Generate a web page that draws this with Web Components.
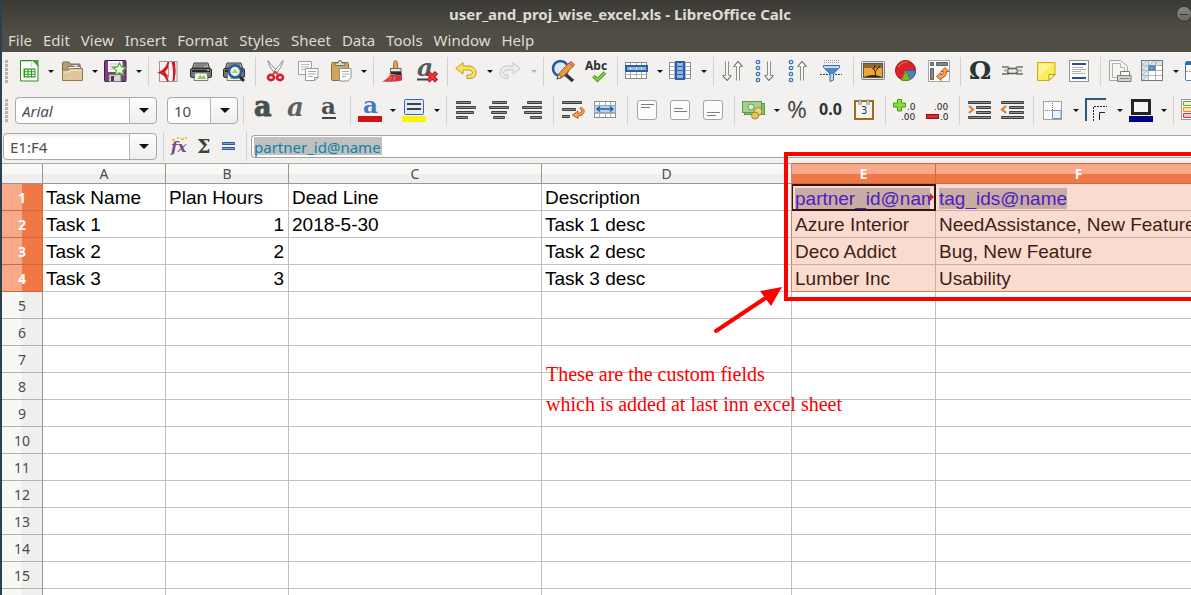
<!DOCTYPE html>
<html lang="en">
<head>
<meta charset="utf-8">
<title>user_and_proj_wise_excel.xls - LibreOffice Calc</title>
<style>
  html, body { margin: 0; height: 100%; overflow: hidden; }
  body { font-family: "Noto Sans", "Open Sans", sans-serif; font-size: 14px; color: #4c4c4c; }
</style>
</head>
<body>
<calc-window>
  <title-bar slot="top">user_and_proj_wise_excel.xls - LibreOffice Calc</title-bar>
  <menu-bar slot="top" items="File,Edit,View,Insert,Format,Styles,Sheet,Data,Tools,Window,Help"></menu-bar>

  <tool-bar slot="bars" label="Standard">
    <tool-button icon="new" label="New" menu></tool-button>
    <tool-button icon="open" label="Open" menu></tool-button>
    <tool-button icon="save" label="Save" menu></tool-button>
    <tool-sep></tool-sep>
    <tool-button icon="pdf" label="Export as PDF"></tool-button>
    <tool-button icon="print" label="Print"></tool-button>
    <tool-button icon="preview" label="Print Preview"></tool-button>
    <tool-sep></tool-sep>
    <tool-button icon="cut" label="Cut"></tool-button>
    <tool-button icon="copy" label="Copy"></tool-button>
    <tool-button icon="paste" label="Paste" menu></tool-button>
    <tool-sep></tool-sep>
    <tool-button icon="brush" label="Clone Formatting"></tool-button>
    <tool-button icon="clear" label="Clear Formatting"></tool-button>
    <tool-sep></tool-sep>
    <tool-button icon="undo" label="Undo" menu></tool-button>
    <tool-button icon="redo" label="Redo" menu disabled></tool-button>
    <tool-sep></tool-sep>
    <tool-button icon="find" label="Find and Replace"></tool-button>
    <tool-button icon="spell" label="Spelling"></tool-button>
    <tool-sep></tool-sep>
    <tool-button icon="row" label="Row" menu></tool-button>
    <tool-button icon="col" label="Column" menu></tool-button>
    <tool-sep></tool-sep>
    <tool-button icon="sort" label="Sort"></tool-button>
    <tool-button icon="asc" label="Sort Ascending"></tool-button>
    <tool-button icon="desc" label="Sort Descending"></tool-button>
    <tool-button icon="filter" label="AutoFilter"></tool-button>
    <tool-sep></tool-sep>
    <tool-button icon="image" label="Image"></tool-button>
    <tool-button icon="chart" label="Chart"></tool-button>
    <tool-button icon="pivot" label="Pivot Table"></tool-button>
    <tool-sep></tool-sep>
    <tool-button icon="omega" label="Special Character"></tool-button>
    <tool-button icon="link" label="Hyperlink"></tool-button>
    <tool-button icon="note" label="Comment"></tool-button>
    <tool-button icon="header" label="Headers and Footers"></tool-button>
    <tool-sep></tool-sep>
    <tool-button icon="area" label="Define Print Area"></tool-button>
    <tool-button icon="freeze" label="Freeze Rows and Columns" menu></tool-button>
    <tool-button icon="split" label="Split Window"></tool-button>
  </tool-bar>

  <tool-bar slot="bars" label="Formatting">
    <combo-box label="Font Name" value="Arial" style="--w:142px;--fs:italic"></combo-box>
    <combo-box label="Font Size" value="10" style="--w:71px;--mr:1px"></combo-box>
    <tool-sep></tool-sep>
    <tool-button icon="bold" label="Bold"></tool-button>
    <tool-button icon="italic" label="Italic"></tool-button>
    <tool-button icon="underline" label="Underline"></tool-button>
    <tool-sep></tool-sep>
    <tool-button icon="fontcolor" label="Font Color" menu></tool-button>
    <tool-button icon="highlight" label="Background Color" menu></tool-button>
    <tool-sep></tool-sep>
    <tool-button icon="left" label="Align Left"></tool-button>
    <tool-button icon="center" label="Center Horizontally"></tool-button>
    <tool-button icon="right" label="Align Right"></tool-button>
    <tool-sep></tool-sep>
    <tool-button icon="wrap" label="Wrap Text"></tool-button>
    <tool-button icon="merge" label="Merge Cells"></tool-button>
    <tool-sep></tool-sep>
    <tool-button icon="vtop" label="Align Top"></tool-button>
    <tool-button icon="vmid" label="Center Vertically"></tool-button>
    <tool-button icon="vbot" label="Align Bottom"></tool-button>
    <tool-sep></tool-sep>
    <tool-button icon="money" label="Currency" menu></tool-button>
    <tool-button icon="percent" label="Percent"></tool-button>
    <tool-button icon="number" label="Number"></tool-button>
    <tool-button icon="date" label="Date"></tool-button>
    <tool-sep></tool-sep>
    <tool-button icon="adddec" label="Add Decimal Place"></tool-button>
    <tool-button icon="deldec" label="Delete Decimal Place"></tool-button>
    <tool-sep></tool-sep>
    <tool-button icon="indent" label="Increase Indent"></tool-button>
    <tool-button icon="outdent" label="Decrease Indent"></tool-button>
    <tool-sep></tool-sep>
    <tool-button icon="borders" label="Borders" menu></tool-button>
    <tool-button icon="bstyle" label="Border Style" menu></tool-button>
    <tool-button icon="bcolor" label="Border Color" menu></tool-button>
    <tool-sep></tool-sep>
    <tool-button icon="cond" label="Conditional Formatting"></tool-button>
  </tool-bar>

  <formula-bar slot="bars" cell="E1:F4" value="partner_id@name"></formula-bar>
  <sheet-grid slot="sheet"></sheet-grid>
  <frame-mark slot="sheet"></frame-mark>
  <arrow-mark slot="sheet"></arrow-mark>
  <sheet-note slot="sheet">These are the custom fields<br>which is added at last inn excel sheet</sheet-note>
</calc-window>

<script>
const svg = (body, w = 24, h = 24) =>
  `<svg width="${w}" height="${h}" viewBox="0 0 ${w} ${h}" aria-hidden="true" fill="none">${body}</svg>`;

const glyph = (t, x, y, size, fill, extra = '') =>
  `<text x="${x}" y="${y}" font-size="${size}" fill="${fill}" ${extra}>${t}</text>`;

const bars = list => list.map(([x, y, w]) =>
  `<rect x="${x}" y="${y}" width="${w}" height="3" rx="1" fill="#3d403c"/><path d="M${x + 1} ${y + 1.5}h${w - 2}" stroke="#8c908a"/>`).join('');

const sheetLines = `<rect x=".5" y="3.5" width="21" height="16" fill="#fff" stroke="#8a8c88"/><path d="M1 7.5h20M1 11.5h20M1 15.5h20M5.5 4v15M11.5 4v15M16.5 4v15" stroke="#b0b2ae"/>`;
const printer = `<path d="M5 4h14l1.500 5h-17z" fill="#a9aba7" stroke="#3c3e3b"/><path d="M6 6h12M5.500 8h9" stroke="#5b5e5a"/><rect x="1.500" y="9.500" width="21" height="9" rx="1.500" fill="#747774" stroke="#2b2d2b"/><rect x="3" y="11" width="18" height="2" fill="#282a28"/><path d="M6 14h12l1 7.500H5z" fill="#f4f6f3" stroke="#777a76"/><path d="M8 20l3-4 2 2 2-2 2 4z" fill="#8cc864"/><path d="M18 11.500h2" stroke="#8ae234"/>`;
const downArrow = x => `<path d="M${x - 1.500} 2.500v14h-3l4.500 5 4.500-5h-3v-14" fill="#f6f7f5" stroke="#8b8e89"/><path d="M${x - 4} 17l4 4.500 4-4.500" stroke="#5c605a"/>`;
const upArrow = x => `<path d="M${x - 1.500} 21.500v-14h-3l4.500-5 4.500 5h-3v14" fill="#f6f7f5" stroke="#8b8e89"/><path d="M${x - 4} 7l4-4.500 4 4.500" stroke="#5c605a"/>`;
const dots = `<g fill="#eaf2fb" stroke="#3f73b5" stroke-width="1.300"><circle cx="4" cy="3" r="1.700"/><circle cx="4" cy="9" r="1.700"/><circle cx="4" cy="15" r="1.700"/><circle cx="4" cy="21" r="1.700"/></g>`;
const box = lines => `<rect x="2.500" y="2.500" width="19" height="19" rx="2.500" fill="#fcfcfc" stroke="#a2a4a0"/><path d="${lines}" stroke="#7b7e79"/>`;
const serif = 'font-family="DejaVu Serif, serif" font-weight="bold"';
const sans = 'font-family="DejaVu Sans, sans-serif"';

const ICONS = {
  new: svg(`<path d="M4.500 1.500H17l5 5v15.500H4.500z" fill="#fff" stroke="#2b8d1e"/><path d="M16 1h6.500v7z" fill="#3da42c"/><path d="M5.500 2.500h10v5" stroke="#b6e2ad"/><rect x="7.500" y="9.500" width="12" height="9" fill="#2b9a1a"/><path d="M9 11.500h2.500m1 0H15m1 0h2.500M9 14h2.500m1 0H15m1 0h2.500M9 16.500h2.500m1 0H15m1 0h2.500" stroke="#fff" stroke-width="1.400"/>`),
  open: svg(`<path d="M2.500 20V4q0-1 1-1H9l1.500 2H20v8" fill="#b89d72" stroke="#80694a"/><path d="M8 7.500h12.500V15H8z" fill="#fff" stroke="#6f6f6f"/><path d="M10 5.500h8v3" fill="#e7e7e7" stroke="#777"/><path d="M2.500 11H8l2-1.500h12.500v12h-20z" fill="#ddc6a0" stroke="#8f7650"/><path d="M4 13h5l1.500-1.500H21" stroke="#f1e2c7"/>`),
  save: svg(`<rect x=".5" y="1.500" width="21.500" height="21" rx="1" fill="#7d3e86" stroke="#451750"/><rect x="4" y="2" width="14.500" height="11" fill="#fafafa"/><path d="M6 5h10M6 7.500h10M6 10h7" stroke="#c0b4c4"/><rect x="5" y="15.500" width="12" height="7" fill="#d9d9d9" stroke="#777"/><rect x="7" y="17" width="3" height="5" fill="#5b2766"/><path d="M15.500 4l2 4 4.500.5-3.300 3 .9 4.500-4.100-2.200-4 2.200.9-4.500L9 8.500l4.500-.5z" fill="#f2fdec" stroke="#55b52e" stroke-width="1.300"/>`),
  pdf: svg(`<rect x="3.500" y="2.500" width="17.500" height="20" fill="#f3f3f2" stroke="#999"/><path d="M12.500 3Q11 10 4 13.500q6 2 8 9" stroke="#cf1b20" stroke-width="2"/><path d="M12.500 6v13L6 13z" fill="#cf1b20"/><path d="M12 9v8L9 13z" fill="#f3f3f2"/><path d="M15.500 3h3.500q1.500 9.500-.5 19h-2q1.500-10-1-19z" fill="#cf1b20"/>`),
  print: svg(printer),
  preview: svg(printer + `<path d="M16 16l6 6" stroke="#2a2c2a" stroke-width="3"/><circle cx="13" cy="12.500" r="6" fill="#e9f2dd" stroke="#2d5a9e" stroke-width="2.500"/><path d="M10 14l3-4 3 4z" fill="#a8cf72"/>`),
  cut: svg(`<path d="M5 1.500q0 5 7 13l2-2.500Q8 6 5 1.500z" fill="#f5f5f5" stroke="#8a8c88"/><path d="M20 1.500q0 5-7 13L11 12q6-6 9-10.500z" fill="#fcfcfc" stroke="#8a8c88"/><g stroke="#cf2029" stroke-width="2.600"><ellipse cx="8" cy="18.500" rx="3" ry="2.600"/><ellipse cx="17" cy="18.500" rx="3" ry="2.600"/></g><path d="M10 15l2.500-2 2.500 2" stroke="#d83a40" stroke-width="2"/>`),
  copy: svg(`<path d="M2.500 2.500h13v13h-13z" fill="#fafafa" stroke="#a0a29e"/><path d="M5 5.500h8M5 8h8M5 10.500h6" stroke="#b9bbb7"/><path d="M9.500 9.500h12.500v9l-3 3H9.500z" fill="#fff" stroke="#979995"/><path d="M12 12.500h8M12 15h8M12 17.500h5" stroke="#a9aba7"/><path d="M18.500 21.500v-3H22" stroke="#979995"/>`),
  paste: svg(`<rect x="2.500" y="3.500" width="17" height="18" rx="1" fill="#d3a45c" stroke="#9a6c24"/><path d="M6 6.500V4h3q0-2.500 2-2.500T13 4h3v2.500z" fill="#ddd" stroke="#6e706c"/><path d="M10.500 9.500h11.500v9l-3 3.500h-8.500z" fill="#fff" stroke="#8f918d"/><path d="M13 12.500h7M13 15h7M13 17.500h4" stroke="#aaa"/>`),
  brush: svg(`<path d="M1 22.500q6-2 8-7l12 1v5q-9 2-20 1z" fill="#d8333b"/><path d="M4 21l5-4M8 21.500l3-4M13 21.500l1-4" stroke="#f0868a"/><path d="M9 15l1-3h10l1 4.500z" fill="#2b2b2b"/><rect x="9.500" y="9.500" width="10.500" height="3" fill="#e9e9e9" stroke="#666"/><path d="M12.500 9.500l.5-7q1.500-2 3 0l1 7z" fill="#e7a657" stroke="#a4672a"/>`),
  clear: svg(glyph('a', 3, 17, 25, '#565b58', serif + ' font-style="italic"') + `<path d="M3 20.500h10" stroke="#3f4441" stroke-width="2"/><path d="M14 13.500l8.500 8.500M22.500 13.500L14 22" stroke="#a30f14" stroke-width="4.500"/><path d="M14.500 14l7.500 7.500M22 14L14.500 21.500" stroke="#f0353a" stroke-width="2.500"/>`),
  undo: svg(`<path d="M.8 9.500L8 3.500V7h7q6 1 6 7 0 5-6 5.500h-3v-3.500h3q2.500-.5 2.500-2.500 0-2-3.500-2.500H8v4z" fill="#f7e36b" stroke="#c09b12" stroke-linejoin="round"/>`),
  redo: svg(`<path d="M21.200 9.500L14 3.500V7H7q-6 1-6 7 0 5 6 5.500h2v-3.500H7q-2.500-.5-2.500-2.500 0-2 3.500-2.500h6v4z" fill="#ececea" stroke="#c6c8c4" stroke-linejoin="round"/>`),
  find: svg(`<path d="M14 15l8 7" stroke="#333" stroke-width="3.500"/><circle cx="9.500" cy="9.500" r="7.500" fill="#dce8f6" stroke="#2a559c" stroke-width="2.600"/><path d="M6 20l1.500-5L18 4l4 3.500L11 18.500z" fill="#f0993a" stroke="#a7601b"/><path d="M18 4l2-1.500 3.500 3-1.500 2z" fill="#f08a92" stroke="#b24b55"/><path d="M6 20l1.500-5 3.500 3.500z" fill="#f0dcb4" stroke="#555"/>`),
  spell: svg(glyph('Abc', 1, 11, 12, '#2c2f2c', 'font-family="Noto Sans, sans-serif" font-weight="bold"') + `<path d="M9.500 17l4 4L21 13.500" stroke="#3f9a14" stroke-width="3.500"/><path d="M9.500 17l4 4L21 13.500" stroke="#8be04e" stroke-width="1.300"/>`),
  row: svg(sheetLines + `<rect x="1" y="7" width="21" height="5" fill="#8fb5e3" stroke="#2a5fa8" stroke-width="2"/><path d="M5.500 8v3M11.500 8v3M16.500 8v3" stroke="#cfe0f4"/>`),
  col: svg(sheetLines + `<rect x="7" y="3" width="8" height="17" fill="#8fb5e3" stroke="#2a5fa8" stroke-width="2"/><path d="M8 7.500h6M8 11.500h6M8 15.500h6" stroke="#2f66b0"/>`),
  sort: svg(downArrow(6) + upArrow(17)),
  asc: svg(dots + downArrow(15)),
  desc: svg(dots + upArrow(15)),
  filter: svg(`<path d="M4 1.500h16M4 3.500h16" stroke="#9a9c98" stroke-dasharray="1 1"/><path d="M0 15.500h22" stroke="#444" stroke-dasharray="2 1"/><path d="M3.500 6.500h16v2l-6 6.500v6l-3.500 1.500V15l-6.500-6.500z" fill="#c5daf1" stroke="#346bb0"/><path d="M4 9h15L13 15h-3z" fill="#4c86cb"/>`),
  image: svg(`<rect x=".5" y="2.500" width="23" height="18" rx="1" fill="#e4e4e1" stroke="#7f817d"/><rect x="2.500" y="4.500" width="19" height="14" fill="#efa53c" stroke="#555"/><path d="M3 5h18v4H3z" fill="#55401f" opacity=".6"/><path d="M3 18q9-4 18 0z" fill="#3b2508"/><path d="M14.500 17q1-5-3-8M14.500 12.500q1-3 4.500-5M13 10l1-4" stroke="#2b1a07"/>`),
  chart: svg(`<circle cx="11.500" cy="11.500" r="10" fill="#dc2226" stroke="#9c1216"/><path d="M11.500 11.500h10q0 6-5 9z" fill="#4d83c4" stroke="#2c5b97"/><path d="M11.500 11.500l5 9q-5 2-9 .5z" fill="#79b92c" stroke="#5a8f1c"/><path d="M4 8q3-5 9-5" stroke="#f3777a"/>`),
  pivot: svg(`<rect x="1.500" y="1.500" width="21" height="21" fill="#fbfbfb" stroke="#a6a8a4"/><path d="M3.500 3.500h3v3h-3zM9.500 3.500h11v3h-11zM3.500 9.500h3v11h-3z" fill="#888a87" stroke="#5d5f5c"/><path d="M18 8.500l4 4h-2.500q0 6-5.500 6.500V21.500l-4.500-4 4.500-4v2.500q2.500-.5 2.500-3.500H14z" fill="#f5a55c" stroke="#c0570c"/>`),
  omega: svg(glyph('Ω', 1, 20, 25, '#2b3334', serif)),
  link: svg(`<path d="M1 8h6l3 4M22 8h-6l-3 4M1 15h6l3-3M22 15h-6l-3-3" stroke="#8e918c" stroke-width="2"/><rect x="6.500" y="9.500" width="10" height="5" rx="2.500" fill="#e9eae8" stroke="#5e615c" stroke-width="1.400"/><path d="M3 11.500h4M16 11.500h5" stroke="#a3a5a1" stroke-width="2"/>`),
  note: svg(`<path d="M3.500 3.500h17.500v12l-6 6H3.500z" fill="#fbec58" stroke="#cdae12"/><path d="M15 21.500v-6h6z" fill="#fff6a5" stroke="#b99b10"/><path d="M5 5h14L5 17z" fill="#fdf594"/>`),
  header: svg(`<rect x="2.500" y="1.500" width="19" height="21" fill="#fbfbfb" stroke="#92948f"/><path d="M5 5h14M5 19h14" stroke="#27509a" stroke-width="2"/><path d="M5 8.500h11M5 10.500h14M5 12.500h9M5 14.500h13" stroke="#b0b2ae"/>`),
  area: svg(`<path d="M1.500 1.500h11l7 6v14h-18z" fill="#f6f6f5" stroke="#a4a6a2"/><path d="M4.500 4.500h8v4h4v10h-12z" stroke="#b0b2ae"/><path d="M12.500 12.500h9v5h-9z" fill="#fff" stroke="#7a7c78"/><path d="M9.500 16.500h13.500v6H9.500z" fill="#d0d2ce" stroke="#7a7c78"/><path d="M12 19.500h9" stroke="#888"/>`),
  freeze: svg(`<rect x=".5" y="1.500" width="21" height="20" fill="#fff" stroke="#777"/><path d="M1 2h6v19H1zM7 2h14v4H7z" fill="#dbe7f4"/><path d="M1 6l5-4M1 11l6-5M1 16l6-5M1 21l6-5M9 6l4-4M14 6l4-4" stroke="#9fbcdc"/><path d="M7.500 2v19M14.500 2v19M1 6.500h20M1 11.500h20M1 16.500h20" stroke="#b3b5b1"/><rect x="8" y="7" width="6" height="4" fill="#6a9ad3" stroke="#3f6fae"/>`),
  split: svg(`<rect x=".5" y="2.500" width="22" height="19" rx="1" fill="#fff" stroke="#477bbd"/><path d="M1 4.500h21" stroke="#3767a8" stroke-width="3"/><path d="M1 12.500h21" stroke="#e88a3c" stroke-dasharray="2 1"/>`),

  bold: svg(glyph('a', 3, 18, 27, '#4b504e', serif + ' stroke="#4b504e"')),
  italic: svg(glyph('a', 3, 18, 26, '#5c6260', serif + ' font-style="italic"')),
  underline: svg(glyph('a', 4, 16, 23, '#4b504e', serif) + `<path d="M5 20h14" stroke="#3f4442" stroke-width="2"/>`),
  fontcolor: svg(glyph('a', 5, 15, 23, '#4579bd', serif) + `<rect y="18" width="24" height="6" fill="#cc1417"/>`),
  highlight: svg(`<rect x="2.500" y="1.500" width="19" height="15" rx="1" fill="#e2ecf8" stroke="#3767ae" /><path d="M5 6h14M5 11h14" stroke="#3f4340" stroke-width="2"/><rect y="18" width="24" height="6" fill="#fff200"/>`),
  left: svg(bars([[2, 3, 15], [2, 8, 20], [2, 13, 18], [2, 18, 12]])),
  center: svg(bars([[5, 3, 15], [2, 8, 20], [4, 13, 16], [6, 18, 12]])),
  right: svg(bars([[7, 3, 15], [2, 8, 20], [4, 13, 18], [10, 18, 12]])),
  wrap: svg(bars([[1, 3, 20], [1, 10, 14], [1, 17, 8]]) + `<path d="M19.500 9.500q4.500 1 3.500 5-1.500 3.500-6 3.500v2.500L11.500 17l5.500-4v2.500q3 0 3.500-2 .5-2-1.500-3z" fill="#f6a25c" stroke="#c35b0e"/>`),
  merge: svg(sheetLines + `<rect x=".5" y="7.500" width="21" height="7" fill="#b7d0ed" stroke="#8ba5c6"/><path d="M3 11h16M6 8.500L3 11l3 2.500M16 8.500l3 2.500-3 2.500" stroke="#2a5a9d" stroke-width="1.400"/>`),
  vtop: svg(box('M6 6.500h13M6 9.500h9')),
  vmid: svg(box('M6 10.500h9M6 13.500h13')),
  vbot: svg(box('M6 14.500h13M6 17.500h9')),
  money: svg(`<rect x="2.500" y="5.500" width="20" height="11" fill="#87bd72" stroke="#5f974c"/><rect x=".5" y="3.500" width="19" height="11" fill="#a5d190" stroke="#5f974c"/><circle cx="9" cy="9" r="3" fill="#dff0d6" stroke="#6aa557"/><circle cx="16" cy="13.500" r="4" fill="#ecd37e" stroke="#a58428"/><circle cx="13" cy="17.500" r="3.500" fill="#e6c65f" stroke="#a58428"/>`),
  percent: svg(glyph('%', 1, 20, 24, '#454a47', 'font-family="Noto Sans, sans-serif"')),
  number: svg(glyph('0.0', 0, 17, 16, '#2e3331', 'font-family="Noto Sans, sans-serif" font-weight="bold"')),
  date: svg(`<rect x="3" y="3" width="18" height="18" fill="#f4f4f2" stroke="#a1691a" stroke-width="2"/><path d="M7 7V2.500q1.500-1.500 2 0V7M15 7V2.500q1.500-1.500 2 0V7" fill="#fff" stroke="#7c7e7a"/>` + glyph('3', 9, 16, 10, '#333', sans)),
  adddec: svg(`<path d="M4.500 1.500h4v3.500h4v4h-4v4h-4V9H.5V5h4z" fill="#8ade3c" stroke="#4b9c13"/>` + glyph('.0', 14, 12, 9, '#222', sans) + glyph('.00', 8, 22, 9, '#222', sans)),
  deldec: svg(glyph('.00', 8, 12, 9, '#222', sans) + `<rect x=".5" y="16.500" width="12" height="4" fill="#e0272d" stroke="#9b1015"/>` + glyph('.0', 14, 22, 9, '#222', sans)),
  indent: svg(bars([[1, 3, 23], [9, 8, 15], [9, 13, 15], [1, 18, 23]]) + `<path d="M2 8l4 3.500L2 15" stroke="#de7d29" stroke-width="2.200"/>`),
  outdent: svg(bars([[1, 3, 23], [9, 8, 15], [9, 13, 15], [1, 18, 23]]) + `<path d="M6 8l-4 3.500L6 15" stroke="#de7d29" stroke-width="2.200"/>`),
  borders: svg(`<rect x="2.500" y="3.500" width="18" height="18" fill="#fbfbfa" stroke="#a1a39f"/><path d="M11.500 5v15M4 12.500h15" stroke="#777" stroke-dasharray="1 1"/><path d="M11.500 20.500v-8h8.500v8z" fill="#eaf1f9" stroke="#6c94c4"/>`),
  bstyle: svg(`<path d="M1 23V1h20" stroke="#2f5777" stroke-width="2"/><path d="M8.500 23V8.500H22" stroke="#222" stroke-dasharray="2 1"/><path d="M14.500 22v-7.500H20" stroke="#222"/>`),
  bcolor: svg(`<rect x="3.500" y="2.500" width="17" height="13" fill="#f5f5f4" stroke="#252525" stroke-width="3"/><rect y="18" width="24" height="6" fill="#000080"/>`),
  cond: svg(`<rect x=".5" y="1.500" width="22" height="20" fill="#fff" stroke="#999"/><path d="M2.500 3.500h18v4h-18z" fill="#e2f6d3" stroke="#5eaa2f"/><path d="M2.500 9.500h18v4h-18z" fill="#fddfb8" stroke="#ee8a1c"/><path d="M2.500 15.500h18v4h-18z" fill="#f9c3c3" stroke="#db3a3a"/>`),

  wizard: svg(`<path d="M1 6h3M6 4h2M10 5h3M14 4h2" stroke="#f0c419" stroke-width="2"/>` + glyph('fx', 0, 18, 15, '#774a85', 'font-family="DejaVu Serif, serif" font-weight="bold" font-style="italic"')),
  sum: svg(glyph('Σ', 1, 19, 19, '#3d4240', serif)),
  equals: svg(`<path d="M1.500 8.500h12v2h-12zM1.500 13.500h12v2h-12z" fill="#7da5d8" stroke="#2c5b9e"/>`)
};

function define(name, styles, render) {
  customElements.define(name, class extends HTMLElement {
    connectedCallback() {
      if (this.shadowRoot) return;
      this.attachShadow({ mode: 'open' }).innerHTML =
        `<style>*{box-sizing:border-box}${styles}</style>${render(this)}`;
    }
  });
}

define('calc-window', `
  :host { display: flex; flex-direction: column; height: 100vh; border-left: 2px solid #2b4150; box-sizing: border-box; background: #f2f1f0; overflow: hidden; }
  header { background: linear-gradient(#3a3934, #4b4a43 27px, #504d45 28px); }
  main { position: relative; flex: 1; min-height: 0; background: #fff; }
`, () => `<header><slot name="top"></slot></header><section><slot name="bars"></slot></section><main><slot name="sheet"></slot></main>`);

define('title-bar', `
  :host { display: flex; align-items: center; height: 28px; padding-left: 62px; color: #dfdbd2; }
  h1 { flex: 1; margin: 0; text-align: center; font-size: 15px; line-height: 28px; font-weight: bold; white-space: nowrap; }
  button { width: 16px; height: 16px; padding: 0; border: 1px solid #35342f; border-radius: 50%; background: linear-gradient(#8c8a84, #66645e); display: grid; place-items: center; margin-right: -1px; }
  i { width: 8px; height: 1px; background: #35342f; }
`, () => `<h1><slot></slot></h1><button aria-label="Minimize"><i></i></button>`);

define('menu-bar', `
  :host { display: block; }
  nav { display: flex; height: 24px; padding: 1px 6px 0; gap: 11px; }
  button { font-family: inherit; font-size: 15px; line-height: 23px; color: #dfdbd2; background: none; border: 0; padding: 0; }
`, el => `<nav>${el.getAttribute('items').split(',').map(t => `<button>${t}</button>`).join('')}</nav>`);

define('tool-bar', `
  :host { display: block; }
  div { display: flex; align-items: center; height: 39px; }
  div::before { content: ""; flex: none; width: 3px; height: 23px; margin: 0 4px 0 3px; background: repeating-linear-gradient(#b5b4b1 0 3px, transparent 3px 4px); }
`, el => `<div role="toolbar" aria-label="${el.getAttribute('label')}"><slot></slot></div>`);

define('tool-sep', `
  :host { display: block; flex: none; width: 8px; height: 29px; }
  i { display: block; width: 1px; height: 100%; margin-left: 4px; background: #d3d2d0; }
`, () => `<i></i>`);

define('tool-button', `
  :host { display: flex; flex: none; }
  button { width: 33px; height: 31px; padding: 3px 5px 4px 4px; border: 0; background: none; display: grid; align-items: start; justify-items: start; }
  button + button { width: 11px; padding: 0; place-items: center; }
  svg { display: block; overflow: visible; }
  i { border: 3px solid transparent; border-top: 3px solid #111; border-bottom: 0; }
  :host([disabled]) i { border-top-color: #b4b3b0; }
`, el => {
  const label = el.getAttribute('label'), off = el.hasAttribute('disabled') ? 'disabled' : '';
  return `<button aria-label="${label}" ${off}>${ICONS[el.getAttribute('icon')]}</button>` +
    (el.hasAttribute('menu') ? `<button aria-label="${label} options" ${off}><i></i></button>` : '');
});

define('combo-box', `
  :host { display: block; flex: none; width: var(--w); height: 27px; margin-left: var(--ml, 3px); margin-right: var(--mr, 7px); }
  label { display: flex; position: relative; height: 100%; }
  select { appearance: none; width: 100%; height: 100%; padding: 0 30px 0 6px; border: 1px solid #aaa8a5; border-radius: 4px; font-family: inherit; font-size: 15px; font-style: var(--fs, normal); color: #4c4c4c;
    background: linear-gradient(#b9b7b4, #b9b7b4) right 26px top / 1px 100% no-repeat, linear-gradient(#fdfdfd, #efeeed) right / 26px 100% no-repeat, linear-gradient(#f2f2f2, #fff 5px); }
  i { position: absolute; right: 8px; top: 11px; border: 5px solid transparent; border-top: 5px solid #111; border-bottom: 0; pointer-events: none; }
`, el => `<label><select aria-label="${el.getAttribute('label')}"><option>${el.getAttribute('value')}</option></select><i></i></label>`);

define('formula-bar', `
  :host { display: block; }
  div { display: flex; align-items: center; height: 33px; padding-left: 1px; }
  combo-box { --w: 154px; --ml: 0px; --mr: 2px; }
  .tools { display: flex; }
  tool-button { width: 25px; }
  input { flex: 1; min-width: 0; height: 23px; margin-left: 1px; padding: 0 2px; border: 1px solid #a5a3a0; border-right: 0; border-radius: 4px 0 0 4px; font-family: inherit; font-size: 15px; color: #0b82a8;
    background: linear-gradient(#c0c0c0, #c0c0c0) 2px 1px / 128px 18px no-repeat, #fff; }
`, el => `<div><combo-box label="Name Box" value="${el.getAttribute('cell')}"></combo-box><tool-sep></tool-sep>
  <span class="tools"><tool-button icon="wizard" label="Function Wizard"></tool-button><tool-button icon="sum" label="Sum"></tool-button><tool-button icon="equals" label="Formula"></tool-button></span>
  <tool-sep></tool-sep><input aria-label="Input line" value="${el.getAttribute('value')}"></div>`);

const ROWS = [
  ['Task Name', 'Plan Hours', 'Dead Line', 'Description', 'partner_id@name', 'tag_ids@name'],
  ['Task 1', '1', '2018-5-30', 'Task 1 desc', 'Azure Interior', 'NeedAssistance, New Feature'],
  ['Task 2', '2', '', 'Task 2 desc', 'Deco Addict', 'Bug, New Feature'],
  ['Task 3', '3', '', 'Task 3 desc', 'Lumber Inc', 'Usability']
];

define('sheet-grid', `
  :host { display: block; height: 100%; overflow: hidden; }
  table { table-layout: fixed; width: 1220px; border-collapse: separate; border-spacing: 0; }
  th, td { padding: 0; overflow: hidden; white-space: nowrap; height: 27px; border: 0 solid #c0c0c0; border-width: 0 1px 1px 0; }
  td { padding: 2px 3px 0; text-align: left; font: 19px/24px "Liberation Sans", Arial, sans-serif; color: #000; }
  th { font-weight: normal; font-size: 14px; color: #4c4c4c; }
  thead th { height: 21px; line-height: 19px; border-top: 1px solid #aaa8a5; border-right-color: #9a9895; border-bottom-color: #9a9895; background: linear-gradient(#f8f8f7 50%, #f0efee 50%); }
  tbody th { padding-top: 2px; line-height: 24px; border-bottom-color: #b3b1ae; background: linear-gradient(90deg, #f8f8f7 50%, #f0efee 50%); border-right-color: #9a9895; }
  th.sel { color: #fff; font-weight: bold; border-color: #d5673c; }
  thead th.sel { background: linear-gradient(#f7a98a 50%, #f07746 50%); }
  tbody th.sel { background: linear-gradient(90deg, #f7a98a 50%, #f07746 50%); }
  td.num { text-align: right; padding-right: 4px; }
  td.sel { background: #fadbd0; color: #3f1d14; border-color: #c9aca2; }
  td.edge { border-right-color: #f07746; }
  td.last { border-bottom-color: #f07746; }
  .field { display: block; width: fit-content; max-width: 135px; overflow: hidden; line-height: 21px; background: #c9aca2; color: #4a22c4; }
  .cursor { position: relative; overflow: visible; }
  .cursor::before { content: ""; position: absolute; inset: 0 -1px -1px 0; border: 2px solid #2f160f; border-left-width: 1px; }
  .cursor::after { content: ""; position: absolute; right: 1px; top: 9px; border: 4px solid transparent; border-left: 4px solid #d8201c; border-right: 0; }
`, () => {
  const letters = [...'ABCDEF'];
  const cell = (r, c) => {
    const text = (ROWS[r] || [])[c] || '', cls = [];
    if (c === 1 && r > 0) cls.push('num');
    if (r < 4 && c > 3) cls.push('sel');
    if (r < 4 && c === 3) cls.push('edge');
    if (r === 3 && c > 3) cls.push('last');
    if (r === 0 && c === 4) cls.push('cursor');
    return `<td class="${cls.join(' ')}">${r === 0 && c > 3 ? `<span class="field">${text}</span>` : text}</td>`;
  };
  return `<table><colgroup>${[41, 123, 123, 253, 250, 144, 286].map(w => `<col style="width:${w}px">`).join('')}</colgroup>
    <thead><tr><th></th>${letters.map((l, i) => `<th scope="col" class="${i > 3 ? 'sel' : ''}">${l}</th>`).join('')}</tr></thead>
    <tbody>${Array.from({ length: 16 }, (_, r) => `<tr><th scope="row" class="${r < 4 ? 'sel' : ''}">${r < 15 ? r + 1 : ''}</th>${letters.map((_, c) => cell(r, c)).join('')}</tr>`).join('')}</tbody></table>`;
});

define('frame-mark', `
  :host { position: absolute; left: 782px; right: 0; top: -11px; height: 149px; box-sizing: border-box; border: 4px solid #fe0000; border-right: 0; pointer-events: none; }
`, () => '');

define('arrow-mark', `
  :host { position: absolute; left: 710px; top: 120px; pointer-events: none; }
  svg { display: block; }
`, () => svg(`<path d="M4 48L58 12" stroke="#fe0000" stroke-width="4" stroke-linecap="round"/><path d="M70 4L48 8l11 15z" fill="#fe0000"/>`, 72, 52));

define('sheet-note', `
  :host { position: absolute; left: 544px; top: 196px; font: 20px/30px "Liberation Serif", "Times New Roman", serif; color: #fe0000; white-space: nowrap; }
`, () => `<slot></slot>`);
</script>
</body>
</html>
